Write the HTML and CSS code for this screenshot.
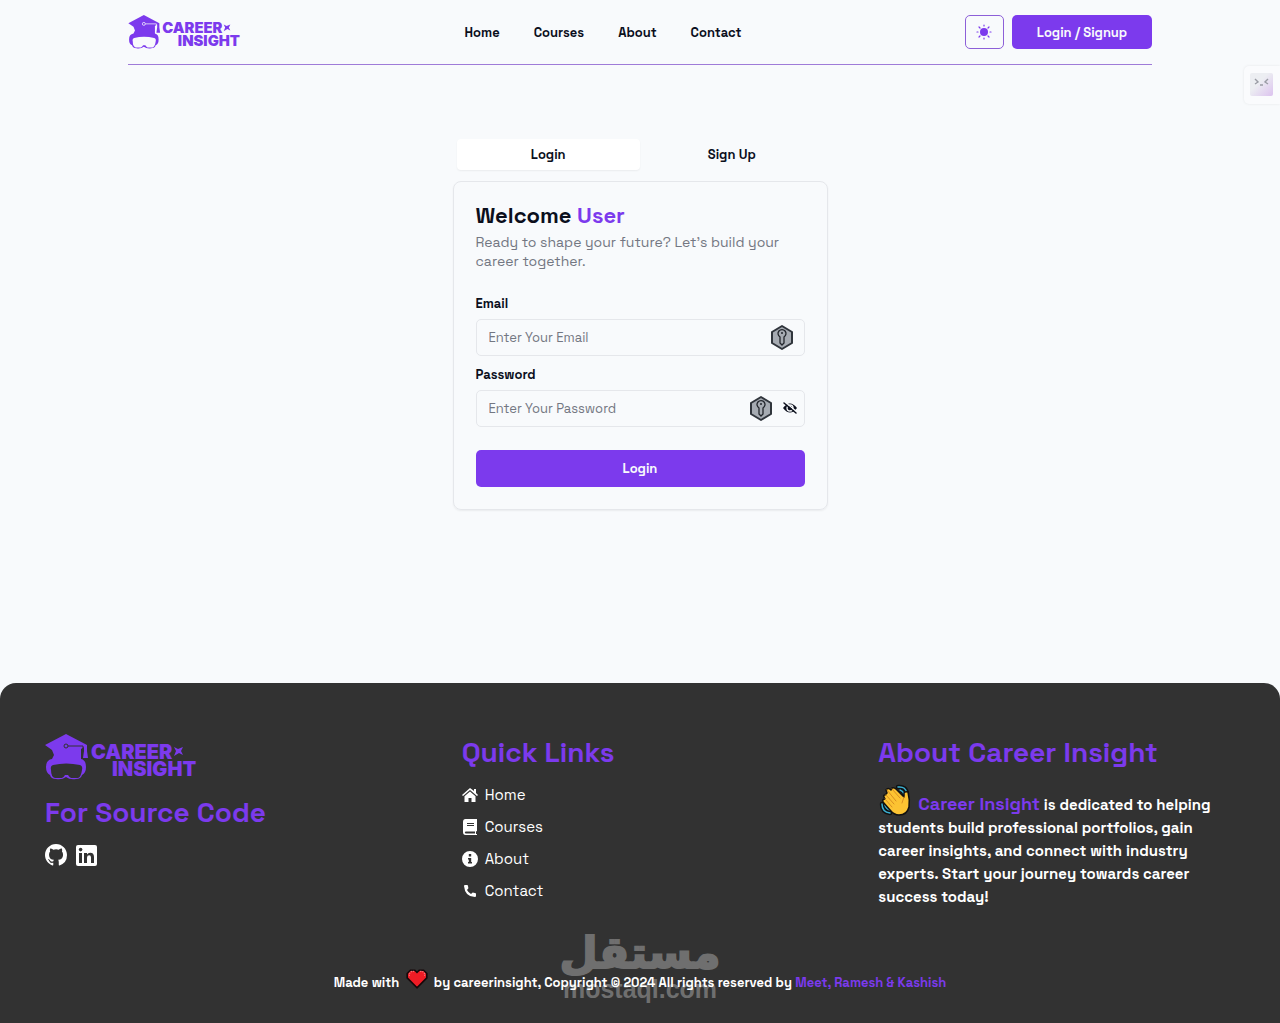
FILE: index.html
```html
<!DOCTYPE html>
<html lang="en">
<head>
  <meta charset="UTF-8">
  <meta name="viewport" content="width=device-width, initial-scale=1.0">
  <title>Career Insight</title>
  <link rel="stylesheet" href="styles.css">
</head>
<body>

  <header class="navbar">
    <a href="#" class="logo" aria-label="Career Insight">
      <svg viewBox="0 0 152 46">
        <path fill="currentColor" d="M21 0 42 11v6l1 7h-5l1-7v-4l-3 2v10q5 1 5 8 0 6-4 8-1 4-6 4-6 1-10-2-4 3-10 2-5 0-6-4-4-2-4-8 0-7 6-8l2-4-2-5-7-5z"/>
        <path class="logo-visor" d="M8 31q13-3 27 0 3 1 2 5-1 7-4 8h-7q-2-1-3-3h-3q-1 2-3 3h-7q-4-1-4-8-1-4 2-5z"/>
        <path class="logo-line" d="M23 12h15v6"/>
        <circle class="logo-line" cx="21" cy="12" r="2"/>
        <text class="logo-text" x="46" y="25">CAREER</text>
        <text class="logo-text" x="67" y="42">INSIGHT</text>
        <path fill="currentColor" d="m129 13 4 2 5-2-2 4 2 4-4-2-5 3 2-5z"/>
      </svg>
    </a>
    <nav class="nav-links">
      <a href="#">Home</a>
      <a href="#">Courses</a>
      <a href="#">About</a>
      <a href="#">Contact</a>
    </nav>
    <div class="nav-actions">
      <button class="theme-btn" aria-label="Toggle theme">
        <svg viewBox="0 0 16 16" width="16" height="16">
          <circle cx="8" cy="8" r="4" fill="currentColor"/>
          <path stroke="currentColor" stroke-width="1.2" stroke-linecap="round" d="M8 1v1M8 14v1M1 8h1M14 8h1M3 3l1 1M12 12l1 1M3 13l1-1M12 4l1-1"/>
        </svg>
      </button>
      <button class="btn signup-btn">Login / Signup</button>
    </div>
  </header>

  <aside class="side-widget">
    <svg viewBox="0 0 24 24" width="24" height="24">
      <defs>
        <linearGradient id="face" x1="0" y1="0" x2="1" y2="1">
          <stop offset="0.4" stop-color="#eceef2"/>
          <stop offset="1" stop-color="#dcc2ef"/>
        </linearGradient>
      </defs>
      <rect width="23" height="23" rx="2" fill="url(#face)"/>
      <path fill="none" stroke="#9a9ca5" stroke-width="1.4" d="m5 6 3 3-3 2M18 6l-3 3 3 2M10 12h3"/>
    </svg>
  </aside>

  <main class="auth">
    <div class="tabs" role="tablist">
      <button class="tab active" role="tab" aria-selected="true">Login</button>
      <button class="tab" role="tab" aria-selected="false">Sign Up</button>
    </div>

    <form class="card">
      <h1>Welcome <span>User</span></h1>
      <p class="card-text">Ready to shape your future? Let’s build your career together.</p>

      <label for="email">Email</label>
      <div class="field">
        <input type="email" id="email" placeholder="Enter Your Email">
        <div class="field-icons">
          <svg class="key" viewBox="0 0 24 26">
            <path fill="#a6abb2" stroke="#30353c" stroke-width="2" stroke-linejoin="round" d="M12 2 22 8v11l-10 6-10-6V8z"/>
            <path fill="#a6abb2" stroke="#22262c" stroke-width="1.3" d="M10 13a4 4 0 1 1 4 0v6l-2 2-2-2z"/>
            <circle cx="12" cy="9" r="1" fill="#22262c"/>
          </svg>
        </div>
      </div>

      <label for="password">Password</label>
      <div class="field">
        <input type="password" id="password" placeholder="Enter Your Password">
        <div class="field-icons with-eye">
          <svg class="key" viewBox="0 0 24 26">
            <path fill="#a6abb2" stroke="#30353c" stroke-width="2" stroke-linejoin="round" d="M12 2 22 8v11l-10 6-10-6V8z"/>
            <path fill="#a6abb2" stroke="#22262c" stroke-width="1.3" d="M10 13a4 4 0 1 1 4 0v6l-2 2-2-2z"/>
            <circle cx="12" cy="9" r="1" fill="#22262c"/>
          </svg>
          <button type="button" class="eye-btn" aria-label="Show password">
            <svg viewBox="0 0 16 14" width="16" height="14" fill="none" stroke="currentColor">
              <path fill="currentColor" stroke="none" d="M1 7q7-9 14 0-7 9-14 0z"/>
              <circle cx="8" cy="7" r="3" stroke="#f8fafc" stroke-width="1.3"/>
              <path stroke="#f8fafc" stroke-width="1.5" d="m3 1 12 10"/>
              <path stroke-width="1.5" stroke-linecap="round" d="m2 2 12 10"/>
            </svg>
          </button>
        </div>
      </div>

      <button type="submit" class="btn submit-btn">Login</button>
    </form>
  </main>

  <footer class="footer">
    <div class="footer-cols">
      <section>
        <svg class="footer-logo" viewBox="0 0 152 46" role="img" aria-label="Career Insight">
          <path fill="currentColor" d="M21 0 42 11v6l1 7h-5l1-7v-4l-3 2v10q5 1 5 8 0 6-4 8-1 4-6 4-6 1-10-2-4 3-10 2-5 0-6-4-4-2-4-8 0-7 6-8l2-4-2-5-7-5z"/>
          <path class="logo-visor" d="M8 31q13-3 27 0 3 1 2 5-1 7-4 8h-7q-2-1-3-3h-3q-1 2-3 3h-7q-4-1-4-8-1-4 2-5z"/>
          <path class="logo-line" d="M23 12h15v6"/>
          <circle class="logo-line" cx="21" cy="12" r="2"/>
          <text class="logo-text" x="46" y="25">CAREER</text>
          <text class="logo-text" x="67" y="42">INSIGHT</text>
          <path fill="currentColor" d="m129 13 4 2 5-2-2 4 2 4-4-2-5 3 2-5z"/>
        </svg>
        <h2>For Source Code</h2>
        <div class="socials">
          <a href="#" aria-label="GitHub">
            <svg viewBox="0 0 16 16" width="22" height="22" fill="currentColor"><path d="M8 0C3.58 0 0 3.58 0 8c0 3.54 2.29 6.53 5.47 7.59.4.07.55-.17.55-.38v-1.49c-2.01.37-2.53-.49-2.69-.94-.09-.23-.48-.94-.82-1.13-.28-.15-.68-.52-.01-.53.63-.01 1.08.58 1.23.82.72 1.21 1.87.87 2.33.66.07-.52.28-.87.51-1.07-1.78-.2-3.64-.89-3.64-3.95 0-.87.31-1.59.82-2.15-.08-.2-.36-1.02.08-2.12 0 0 .67-.21 2.2.82a7.6 7.6 0 0 1 4 0c1.53-1.04 2.2-.82 2.2-.82.44 1.1.16 1.92.08 2.12.51.56.82 1.27.82 2.15 0 3.07-1.87 3.75-3.65 3.95.29.25.54.73.54 1.48v2.2c0 .21.15.46.55.38A8 8 0 0 0 16 8c0-4.42-3.58-8-8-8z"/></svg>
          </a>
          <a href="#" aria-label="LinkedIn">
            <svg viewBox="0 0 21 21" width="21" height="21">
              <rect width="21" height="21" rx="2" fill="currentColor"/>
              <circle cx="4.6" cy="4.6" r="1.8" fill="#323232"/>
              <path fill="#323232" d="M3 8h3v10H3zM8 8h3v1.4q1-1.7 3.2-1.7 3.8 0 3.8 4.3v6h-3v-5.5q0-2.2-1.8-2.2-2.2 0-2.2 2.4V18H8z"/>
            </svg>
          </a>
        </div>
      </section>

      <section>
        <h2>Quick Links</h2>
        <ul class="quick-links">
          <li><a href="#">
            <svg viewBox="0 0 16 16"><path d="M8 1 0 8l1 1 7-6 7 6 1-1-2-2V2h-2v2z"/><path d="m8 4.6 5.5 4.7V15h-4v-4h-3v4h-4V9.3z"/></svg>Home</a></li>
          <li><a href="#">
            <svg viewBox="0 0 16 16"><path fill-rule="evenodd" d="M3.5 0H15v12l-1 .5V15h1v1H3.5Q1 16 1 13V3q0-3 2.5-3zM5 4v1h7V4zM5 6v1h7V6zM3.5 12.5q-1.5 1 0 2H13v-2z"/></svg>Courses</a></li>
          <li><a href="#">
            <svg viewBox="0 0 16 16"><path fill-rule="evenodd" d="M8 0a8 8 0 1 0 0 16A8 8 0 0 0 8 0zM6.8 3h2.4v2.4H6.8zM6 7h3.2v4H10v1.500H6V11h.8V8.500H6z"/></svg>About</a></li>
          <li><a href="#">
            <svg viewBox="0 0 16 16"><path d="M2 3q0-1 1-1h2q1 0 1 1l.4 2.3L5 7q1.5 2.7 4 4l1.7-1.5L13 10q1 0 1 1v2q0 1-1 1Q3 14 2 3z"/></svg>Contact</a></li>
        </ul>
      </section>

      <section>
        <h2>About Career Insight</h2>
        <p class="about-text">
          <svg class="wave" viewBox="0 0 36 32" aria-hidden="true">
            <path fill="none" stroke="#111" stroke-width="4.5" stroke-linecap="round" d="M20 3q8-1 9 7M23 6q3 1 3 4M4 20q0 8 8 9M7 21q1 4 5 5"/>
            <path fill="none" stroke="#3cb1d3" stroke-width="1.5" stroke-linecap="round" d="M20 3q8-1 9 7M22 6q3 1 4 4M4 20q0 8 8 9M7 21q1 4 5 5"/>
            <path fill="#fcc332" stroke="#111" stroke-width="1.5" stroke-linejoin="round" d="m7 11 2-2-1-3q2-3 5 0l1-2q2-1 4 1l8 8V9q1-2 4-1 2 8 1 15-2 8-10 8-5 0-9-5l-7-8q-1-3 2-3l-1-2q-1-2 1-2z"/>
            <path fill="none" stroke="#d98e20" stroke-linecap="round" d="m8 11 8 9M9 6l9 11M14 5l8 9M7 15l7 8M26 13l-2 6"/>
          </svg>
          <strong>Career Insight</strong> is dedicated to helping students build professional portfolios, gain career insights, and connect with industry experts. Start your journey towards career success today!
        </p>
      </section>
    </div>

    <div class="copyright">
      <div class="watermark">
        <span class="watermark-ar" lang="ar" dir="rtl">مستقل</span>
        <span class="watermark-en">mostaql.com</span>
      </div>
      <p>Made with
        <svg class="heart" viewBox="0 0 22 18" role="img" aria-label="love"><path fill="#ef1c25" stroke="#16080a" stroke-width="1.5" d="M11 17 2 8V4l3-3h4l2 2 2-2h4l3 3v4z"/><path fill="none" stroke="#f48b91" stroke-dasharray="1 1" d="M4 6V4l2-2h2M14 2h2l2 2v2"/></svg>
        by careerinsight, Copyright © 2024 All rights reserved by <a href="#">Meet, Ramesh &amp; Kashish</a></p>
    </div>
  </footer>

</body>
</html>
```
FILE: styles.css
```css
* {
  box-sizing: border-box;
}

body {
  display: flex;
  flex-direction: column;
  min-height: 100vh;
  margin: 0;
  font-family: "Space Grotesk", Inter, "Liberation Sans", sans-serif;
  font-size: 14px;
  color: #0b0f1c;
  background-color: #f8fafc;
}

h1, h2, p, ul {
  margin: 0;
  padding: 0;
}

a {
  color: inherit;
  text-decoration: none;
}

button, input {
  font: inherit;
  color: inherit;
}

button {
  padding: 0;
  border: none;
  background: none;
  cursor: pointer;
}

svg {
  display: block;
}

/* logo */
.logo,
.footer-logo {
  color: #7c3aed;
}

.logo {
  --visor: #f8fafc;
}

.logo svg {
  width: 113px;
  height: 34px;
}

.footer-logo {
  --visor: #323232;
  width: 152px;
  height: 46px;
}

.logo-visor {
  fill: var(--visor);
}

.logo-line {
  fill: none;
  stroke: var(--visor);
}

.logo-text {
  font-family: Inter, sans-serif;
  font-size: 20px;
  font-weight: 900;
  fill: currentColor;
}

/* navbar */
.navbar {
  display: flex;
  align-items: center;
  justify-content: space-between;
  width: 80%;
  height: 65px;
  margin: 0 auto;
  border-bottom: 1px solid #9f7bd8;
}

.nav-links {
  display: flex;
  gap: 34px;
  font-size: 13px;
  font-weight: 600;
}

.nav-actions {
  display: flex;
  gap: 8px;
}

.theme-btn {
  display: grid;
  place-items: center;
  width: 39px;
  height: 34px;
  border: 1px solid #8d5fd8;
  border-radius: 5px;
  color: #7c3aed;
}

.btn {
  border-radius: 5px;
  font-size: 13px;
  font-weight: 600;
  color: #f8fafc;
  background-color: #7c3aed;
}

.signup-btn {
  width: 140px;
  height: 34px;
}

.side-widget {
  position: absolute;
  top: 66px;
  right: 0;
  padding: 7px 6px;
  border-radius: 5px 0 0 5px;
  background-color: #fafbfd;
  box-shadow: 0 0 3px rgba(0, 0, 0, 0.08);
}

/* login form */
.auth {
  flex: 1;
  width: 100%;
  max-width: 375px;
  margin: 0 auto;
  padding: 70px 0 173px;
}

.tabs {
  display: grid;
  grid-template-columns: 1fr 1fr;
  padding: 4px;
}

.tab {
  height: 31px;
  border-radius: 4px;
  font-size: 13px;
  font-weight: 600;
}

.tab.active {
  background-color: #fff;
  box-shadow: 0 1px 2px rgba(0, 0, 0, 0.06);
}

.card {
  margin-top: 7px;
  padding: 22px;
  border: 1px solid #e5e7eb;
  border-radius: 8px;
  box-shadow: 0 1px 2px rgba(0, 0, 0, 0.06);
}

.card h1 {
  font-size: 22px;
  font-weight: 600;
  line-height: 22px;
}

.card h1 span {
  color: #7c3aed;
}

.card-text {
  margin: 7px 0 24px;
  line-height: 19px;
  font-size: 14px;
  color: #737782;
}

.card label {
  display: block;
  margin-bottom: 6px;
  font-size: 13px;
  font-weight: 600;
  line-height: 18px;
}

.field {
  position: relative;
  margin-bottom: 10px;
}

.field input {
  display: block;
  width: 100%;
  height: 37px;
  padding: 0 12px;
  border: 1px solid #e5e7eb;
  border-radius: 5px;
  font-size: 13px;
  background: none;
}

.field input::placeholder {
  color: #737782;
  opacity: 1;
}

/* icons over the right end of the input */
.field-icons {
  position: absolute;
  top: 0;
  right: 11px;
  bottom: 2px;
  display: flex;
  align-items: center;
  gap: 9px;
}

.field-icons.with-eye {
  right: 7px;
}

.key {
  width: 24px;
  height: 26px;
}

.submit-btn {
  width: 100%;
  height: 37px;
  margin-top: 13px;
}

/* footer */
.footer {
  padding: 51px 45px 31px;
  border-radius: 16px 16px 0 0;
  color: #fff;
  background-color: #323232;
}

.footer-cols {
  display: grid;
  grid-template-columns: repeat(3, 1fr);
  gap: 60px;
}

.footer h2 {
  font-size: 28px;
  font-weight: 600;
  line-height: 36px;
  color: #7c3aed;
}

.footer-logo {
  margin-bottom: 14px;
}

.socials {
  display: flex;
  align-items: center;
  gap: 9px;
  margin-top: 14px;
}

.quick-links {
  display: grid;
  gap: 8px;
  margin-top: 13px;
  list-style: none;
}

.quick-links a {
  display: flex;
  align-items: center;
  gap: 7px;
  font-size: 15px;
  line-height: 24px;
}

.quick-links svg {
  width: 16px;
  height: 16px;
  fill: currentColor;
}

.about-text {
  margin-top: 14px;
  font-size: 15px;
  font-weight: 600;
  line-height: 23px;
}

.about-text strong {
  font-size: 18px;
  font-weight: 600;
  color: #7c3aed;
}

.wave {
  display: inline-block;
  width: 36px;
  height: 32px;
  vertical-align: -6px;
}

.copyright {
  position: relative;
  margin-top: 61px;
  text-align: center;
  font-size: 13px;
  font-weight: 600;
  line-height: 20px;
}

.copyright p {
  position: relative;
}

.copyright a {
  color: #7c3aed;
}

.heart {
  display: inline-block;
  width: 24px;
  height: 20px;
  margin: 0 2px;
  vertical-align: -2px;
}

/* watermark sits behind the copyright line */
.watermark {
  position: absolute;
  bottom: -10px;
  left: 50%;
  display: flex;
  flex-direction: column;
  align-items: center;
  transform: translateX(-50%);
  color: #6f6f6f;
}

.watermark-ar {
  font-family: "DejaVu Sans", sans-serif;
  font-size: 44px;
  font-weight: 700;
  line-height: 44px;
  -webkit-text-stroke: 2px #6f6f6f;
}

.watermark-en {
  font-family: "Liberation Sans", sans-serif;
  font-size: 25px;
  font-weight: 700;
  line-height: 28px;
}
```
